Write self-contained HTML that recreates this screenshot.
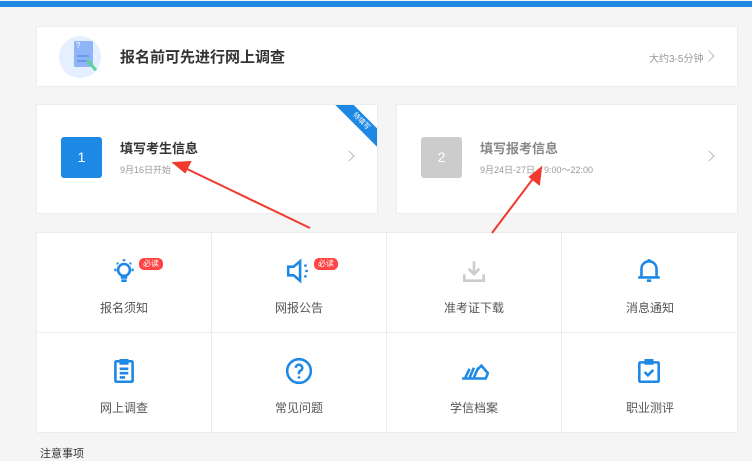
<!DOCTYPE html>
<html><head><meta charset="utf-8"><style>
*{margin:0;padding:0;box-sizing:border-box}
body{width:752px;height:458px;overflow:hidden;background:#f5f5f5;font-family:"Liberation Sans","Noto Sans CJK SC",sans-serif;position:relative}
.top{position:absolute;left:0;top:1px;width:752px;height:6px;background:#1e88e5}
.card{position:absolute;background:#fff;border:1px solid #ececec}
.t{position:absolute;white-space:nowrap}
.chev{position:absolute;width:8px;height:8px;border-top:1.5px solid #bbb;border-right:1.5px solid #bbb;transform:rotate(45deg)}
.grid{position:absolute;left:36px;top:232px;width:702px;height:201px;background:#fff;border:1px solid #ececec}
.cell{position:absolute;width:175px;height:100px;border-right:1px solid #ececec;border-bottom:1px solid #ececec}
.cell .l{position:absolute;top:66px;width:100%;text-align:center;font-size:12px;color:#555}
.cell svg{position:absolute;left:73px;top:24px}
.badge{position:absolute;background:#f44;color:#fff;font-size:8px;border-radius:5px;padding:1px 4px;line-height:10px}
</style></head><body>
<div class="top"></div>
<div class="card" style="left:36px;top:26px;width:702px;height:61px">
 <div style="position:absolute;left:22px;top:9px;width:42px;height:42px;border-radius:50%;background:#e6efff"></div>
 <div style="position:absolute;left:37px;top:14px;width:19px;height:26px;background:#8fb5f7;border-radius:1px"></div>
 <div class="t" style="left:39px;top:14px;font-size:8px;color:#fff">?</div>
 <div style="position:absolute;left:40px;top:28px;width:12px;height:2px;background:#6a9af2"></div>
 <div style="position:absolute;left:40px;top:33px;width:12px;height:2px;background:#6a9af2"></div>
 <div style="position:absolute;left:53px;top:31px;width:3px;height:14px;background:#5fd39a;transform:rotate(-40deg)"></div>
 <div class="t" style="left:83px;top:19px;font-size:15px;font-weight:bold;color:#333">报名前可先进行网上调查</div>
 <div class="t" style="left:612px;top:23px;font-size:10px;color:#999">大约3-5分钟</div>
 <div class="chev" style="left:668px;top:25px"></div>
</div>
<div class="card" style="left:36px;top:104px;width:342px;height:110px;overflow:hidden">
 <div style="position:absolute;left:24px;top:32px;width:41px;height:41px;background:#1e88e5;border-radius:3px;color:#fff;font-size:14px;text-align:center;line-height:41px">1</div>
 <div class="t" style="left:83px;top:33px;font-size:13px;font-weight:bold;color:#333">填写考生信息</div>
 <div class="t" style="left:83px;top:58px;font-size:9px;color:#999">9月16日开始</div>
 <div class="chev" style="left:308px;top:47px"></div>
 <div style="position:absolute;left:294px;top:10px;width:60px;height:13px;background:#1e88e5;transform:rotate(45deg);color:#fff;font-size:7px;text-align:center;line-height:13px">待填写</div>
</div>
<div class="card" style="left:396px;top:104px;width:342px;height:110px">
 <div style="position:absolute;left:24px;top:32px;width:41px;height:41px;background:#ccc;border-radius:3px;color:#fff;font-size:14px;text-align:center;line-height:41px">2</div>
 <div class="t" style="left:83px;top:33px;font-size:13px;font-weight:bold;color:#888">填写报考信息</div>
 <div class="t" style="left:83px;top:58px;font-size:9px;color:#999">9月24日-27日，9:00～22:00</div>
 <div class="chev" style="left:308px;top:47px"></div>
</div>
<div class="grid">
 <div class="cell" style="left:0;top:0"><svg width="28" height="28" viewBox="0 0 26 26" fill="none" stroke="#1e88e5" stroke-width="2.4"><circle cx="13" cy="12" r="5.5"/><path d="M10 19h6M10.5 22h5M13 2v2M4 12h2M20 12h2M6.5 5.5l1 1M19.5 5.5l-1 1"/></svg><span class="badge" style="left:102px;top:25px">必读</span><div class="l">报名须知</div></div>
 <div class="cell" style="left:175px;top:0"><svg width="28" height="28" viewBox="0 0 26 26" fill="none" stroke="#1e88e5" stroke-width="2.4"><path d="M3 9h5l6-5v18l-6-5H3z"/><path d="M19 7v2M20 12v2M19 17v2"/></svg><span class="badge" style="left:102px;top:25px">必读</span><div class="l">网报公告</div></div>
 <div class="cell" style="left:350px;top:0"><svg width="28" height="28" viewBox="0 0 26 26" fill="none" stroke="#ccc" stroke-width="2.4"><path d="M13 4v12M8 11l5 5 5-5M4 16v6h18v-6"/></svg><div class="l">准考证下载</div></div>
 <div class="cell" style="left:525px;top:0;border-right:0;width:176px"><svg width="28" height="28" viewBox="0 0 26 26" fill="none" stroke="#1e88e5" stroke-width="2.4"><path d="M6 19V11a7 7 0 0 1 14 0v8M3 19h20M13 2v2M11 22h4"/></svg><div class="l">消息通知</div></div>
 <div class="cell" style="left:0;top:100px;border-bottom:0"><svg width="28" height="28" viewBox="0 0 26 26" fill="none" stroke="#1e88e5" stroke-width="2.4"><rect x="5" y="4" width="16" height="19" rx="1"/><path d="M10 3h6v3h-6zM9 11h8M9 15h8M9 19h5"/></svg><div class="l">网上调查</div></div>
 <div class="cell" style="left:175px;top:100px;border-bottom:0"><svg width="28" height="28" viewBox="0 0 26 26" fill="none" stroke="#1e88e5" stroke-width="2.4"><circle cx="13" cy="13" r="11"/><path d="M10 10a3 3 0 1 1 4 3c-1 .5-1 1-1 3M13 18v2"/></svg><div class="l">常见问题</div></div>
 <div class="cell" style="left:350px;top:100px;border-bottom:0"><svg width="30" height="28" viewBox="0 0 28 26" fill="none" stroke="#1e88e5" stroke-width="2.4"><path d="M2 20h22l2-5-6-7-4 4M5 19l4-8M9 19l4-9M13 19l4-9"/></svg><div class="l">学信档案</div></div>
 <div class="cell" style="left:525px;top:100px;border:0;width:176px"><svg width="28" height="28" viewBox="0 0 26 26" fill="none" stroke="#1e88e5" stroke-width="2.4"><rect x="4" y="5" width="18" height="18" rx="1"/><path d="M10 3h6v3h-6zM9 14l3 3 5-5"/></svg><div class="l">职业测评</div></div>
</div>
<div class="t" style="left:40px;top:445px;font-size:11px;color:#333">注意事项</div>
<svg style="position:absolute;left:0;top:0" width="752" height="458"><g stroke="#f03a2e" stroke-width="2" fill="#f03a2e"><line x1="310" y1="228" x2="185" y2="168"/><polygon points="174,163 190,162 185,172"/><line x1="492" y1="233" x2="535" y2="176"/><polygon points="541,168 539,184 530,177"/></g></svg>
</body></html>
